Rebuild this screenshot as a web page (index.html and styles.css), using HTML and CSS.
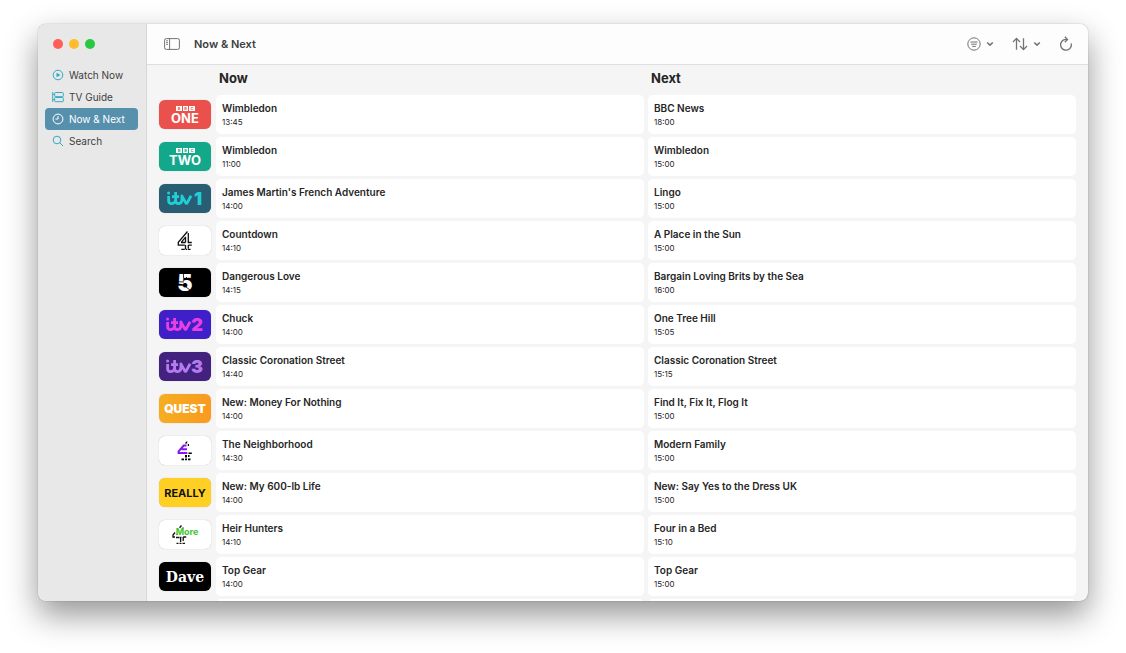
FILE: index.html
```html
<!DOCTYPE html>
<html lang="en">
<head>
<meta charset="utf-8">
<title>Now &amp; Next</title>
<link rel="stylesheet" href="styles.css">
</head>
<body>
<svg class="defs" aria-hidden="true">
  <symbol id="bbc" viewBox="0 0 52 29">
    <rect x="17" y="6" width="6" height="5" fill="#fff"/><rect x="24" y="6" width="5" height="5" fill="#fff"/><rect x="30" y="6" width="6" height="5" fill="#fff"/>
  </symbol>
  <symbol id="itv" viewBox="0 0 52 29">
    <circle cx="8.6" cy="9" r="1.5" fill="currentColor"/>
    <path d="M8.6 12v4.600q0 3 2.800 3q3.400 0 4.200-3.400M15.600 8v8.400q0 3.200 3 3.200q3.300 0 3.300-4v-3.600l4.200 7.400h.8l4.200-7.600M12 12.600h7" fill="none" stroke="currentColor" stroke-width="2.800" stroke-linejoin="round"/>
  </symbol>
</svg>

<div class="window">
  <aside class="sidebar">
    <div class="lights">
      <button class="light red" aria-label="Close"></button>
      <button class="light yellow" aria-label="Minimise"></button>
      <button class="light green" aria-label="Zoom"></button>
    </div>
    <nav class="nav">
      <a class="nav-item" href="#watch"><svg class="icon" viewBox="0 0 12 12"><circle cx="6" cy="6" r="4.8"/><path class="solid" d="M4.500 3.700v4.600L8.500 6z"/></svg>Watch Now</a>
      <a class="nav-item" href="#guide"><svg class="icon" viewBox="0 0 12 12"><path d="M.7 1v10M.7 3.300h2M.7 8.700h2"/><rect x="2.700" y="1.500" width="8.600" height="4.200" rx=".8"/><rect x="2.700" y="6.500" width="8.600" height="4.200" rx=".8"/></svg>TV Guide</a>
      <a class="nav-item selected" href="#now" aria-current="page"><svg class="icon" viewBox="0 0 12 12"><circle cx="6" cy="6" r="4.900"/><path d="M6 3v3H3.400"/></svg>Now &amp; Next</a>
      <a class="nav-item" href="#search"><svg class="icon" viewBox="0 0 12 12"><circle cx="5" cy="5" r="3.800"/><path d="M7.800 7.800l3.200 3.200"/></svg>Search</a>
    </nav>
  </aside>

  <main class="main">
    <header class="toolbar">
      <button class="tool" aria-label="Toggle sidebar"><svg width="16" height="12" viewBox="0 0 16 12"><rect x=".6" y=".6" width="14.800" height="10.800" rx="1.600"/><path d="M5.600.6v10.800M2.200 2.800h1.700M2.200 4.600h1.700M2.200 6.400h1.700"/></svg></button>
      <h1 class="title">Now &amp; Next</h1>
      <div class="tools">
        <button class="tool" aria-label="Filter"><svg width="14" height="14" viewBox="0 0 14 14"><circle cx="7" cy="7" r="6.200"/><path d="M3.400 5h7.200M4.200 7.200h5.600M5.200 9.400h3.600"/></svg><svg width="8" height="6" viewBox="0 0 8 6"><path class="bold" d="M1.200 1.500L4 4.200l2.800-2.700"/></svg></button>
        <button class="tool" aria-label="Sort"><svg width="16" height="14" viewBox="0 0 16 14"><path class="mid" d="M4.500 12.800V1.600M1 5l3.500-3.600L8 5M11.500 1.200v11.200M8 9l3.500 3.600L15 9"/></svg><svg width="8" height="6" viewBox="0 0 8 6"><path class="bold" d="M1.200 1.500L4 4.200l2.800-2.700"/></svg></button>
        <button class="tool" aria-label="Reload"><svg width="14" height="16" viewBox="0 0 14 16"><path class="mid" d="M12.200 7.400A5.400 5.400 0 1 1 6.800 3.400h1.400M5.800.8l2.700 2.600L5.800 6.200"/></svg></button>
      </div>
    </header>

    <div class="scroll">
      <table class="guide">
        <thead><tr><td></td><th scope="col">Now</th><th scope="col">Next</th></tr></thead>
        <tbody>
          <tr>
            <th scope="row"><svg class="logo one" viewBox="0 0 52 29" role="img" aria-label="BBC One"><use href="#bbc"/><text class="bbc" x="20" y="10">B</text><text class="bbc" x="26.500" y="10">B</text><text class="bbc" x="33" y="10">C</text><text class="sans" x="26" y="23">ONE</text></svg></th>
            <td><b>Wimbledon</b><time>13:45</time></td><td><b>BBC News</b><time>18:00</time></td>
          </tr>
          <tr>
            <th scope="row"><svg class="logo two" viewBox="0 0 52 29" role="img" aria-label="BBC Two"><use href="#bbc"/><text class="bbc" x="20" y="10">B</text><text class="bbc" x="26.500" y="10">B</text><text class="bbc" x="33" y="10">C</text><text class="sans" x="26" y="23">TWO</text></svg></th>
            <td><b>Wimbledon</b><time>11:00</time></td><td><b>Wimbledon</b><time>15:00</time></td>
          </tr>
          <tr>
            <th scope="row"><svg class="logo itv1" viewBox="0 0 52 29" role="img" aria-label="ITV1"><use href="#itv" x="1"/><text class="digit" x="39" y="21">1</text></svg></th>
            <td><b>James Martin's French Adventure</b><time>14:00</time></td><td><b>Lingo</b><time>15:00</time></td>
          </tr>
          <tr>
            <th scope="row"><svg class="logo white" viewBox="0 0 52 29" role="img" aria-label="Channel 4"><path class="mark" d="M28.500 5.500L19.300 16.300v2.800h6.500M22 16.500h4.500M26.500 11v5.500M26.500 19v4M29.300 7v9.500h3.500M29.300 19.200h3.500M29.300 19v3.500M22.300 23.400h3.500M26.600 23.400h1.500M28.800 23.400h2.800M22.200 16.300l4.600-5.400"/></svg></th>
            <td><b>Countdown</b><time>14:10</time></td><td><b>A Place in the Sun</b><time>15:00</time></td>
          </tr>
          <tr>
            <th scope="row"><svg class="logo black" viewBox="0 0 52 29" role="img" aria-label="Channel 5"><text class="five" x="26" y="23">5</text><path d="M24.500 5v5M18 13.600l7 .4M27.500 12v-3M27 19l4 3" stroke="#000" stroke-width=".8"/></svg></th>
            <td><b>Dangerous Love</b><time>14:15</time></td><td><b>Bargain Loving Brits by the Sea</b><time>16:00</time></td>
          </tr>
          <tr>
            <th scope="row"><svg class="logo itv2" viewBox="0 0 52 29" role="img" aria-label="ITV2"><use href="#itv"/><text class="digit" x="38" y="21">2</text></svg></th>
            <td><b>Chuck</b><time>14:00</time></td><td><b>One Tree Hill</b><time>15:05</time></td>
          </tr>
          <tr>
            <th scope="row"><svg class="logo itv3" viewBox="0 0 52 29" role="img" aria-label="ITV3"><use href="#itv"/><text class="digit" x="38" y="21">3</text></svg></th>
            <td><b>Classic Coronation Street</b><time>14:40</time></td><td><b>Classic Coronation Street</b><time>15:15</time></td>
          </tr>
          <tr>
            <th scope="row"><svg class="logo quest" viewBox="0 0 52 29" role="img" aria-label="Quest"><text class="wide" x="26" y="19">QUEST</text></svg></th>
            <td><b>New: Money For Nothing</b><time>14:00</time></td><td><b>Find It, Fix It, Flog It</b><time>15:00</time></td>
          </tr>
          <tr>
            <th scope="row"><svg class="logo white" viewBox="0 0 52 29" role="img" aria-label="E4"><path d="M26 7l2.200-2v2.500H26zM28.800 8h1.200v2h-1.200zM29.500 16.500h3.300v1.500h-3.300zM29 19h1.500v2H29zM26 19h2v2.500h-2zM22.500 22.400h2.500v1.800h-2.500zM26 22.400h2v1.800h-2zM29 22.400h2.500v1.800H29z"/><path d="M27.500 9.500h-2.800L19.600 15.400v1.700h8.800M22.500 13.300h5.500" fill="none" stroke="#8418ef" stroke-width="2"/></svg></th>
            <td><b>The Neighborhood</b><time>14:30</time></td><td><b>Modern Family</b><time>15:00</time></td>
          </tr>
          <tr>
            <th scope="row"><svg class="logo really" viewBox="0 0 52 29" role="img" aria-label="Really"><text class="tight" x="26" y="19">REALLY</text></svg></th>
            <td><b>New: My 600-lb Life</b><time>14:00</time></td><td><b>New: Say Yes to the Dress UK</b><time>15:00</time></td>
          </tr>
          <tr>
            <th scope="row"><svg class="logo white" viewBox="0 0 52 29" role="img" aria-label="More4"><path class="mark" d="M22.500 5.500l-2 2.300M16 12.500l-2 2.500v2h2M17 17.500h3.500M21 17.300h1.500M17.500 14.800l1-.8M21.600 17v5M24.200 17h3M24.200 17v4M17.500 23.400h2M20.500 23.400h2M23.500 23.400h2.500M24 7.500v1"/><text class="more" x="28" y="15">More</text></svg></th>
            <td><b>Heir Hunters</b><time>14:10</time></td><td><b>Four in a Bed</b><time>15:10</time></td>
          </tr>
          <tr>
            <th scope="row"><svg class="logo black" viewBox="0 0 52 29" role="img" aria-label="Dave"><text class="slab" x="26" y="20">Dave</text></svg></th>
            <td><b>Top Gear</b><time>14:00</time></td><td><b>Top Gear</b><time>15:00</time></td>
          </tr>
          <tr><th></th><td></td><td></td></tr>
        </tbody>
      </table>
    </div>
  </main>
</div>
</body>
</html>
```
FILE: styles.css
```css
* { box-sizing: border-box; }

body {
  margin: 0;
  height: 100vh;
  padding: 24px 38px 52px;
  background: #fff;
  color: #262626;
  font: 10px/14px Inter, "Liberation Sans", sans-serif;
  overflow: hidden;
}

.defs { display: none; }

button {
  border: 0;
  padding: 0;
  background: none;
}

.window {
  display: flex;
  height: 100%;
  border-radius: 8px;
  overflow: hidden;
  background: #f5f5f5;
  box-shadow: 0 0 1px rgba(0, 0, 0, .5), 0 14px 32px rgba(0, 0, 0, .42);
}

.sidebar {
  flex: 0 0 109px;
  padding: 0 8px 0 7px;
  background: #e8e8e8;
  border-right: 1px solid #d6d6d6;
}

.lights {
  display: flex;
  align-items: center;
  gap: 6px;
  height: 40px;
  padding-left: 8px;
}

.light {
  width: 10px;
  height: 10px;
  border-radius: 50%;
}

.red { background: #ff5f57; }
.yellow { background: #febc2e; }
.green { background: #28c840; }

.nav-item {
  display: flex;
  align-items: center;
  gap: 5px;
  height: 22px;
  padding-left: 7px;
  border-radius: 4px;
  color: #404040;
  text-decoration: none;
  white-space: nowrap;
}

.selected {
  background: #5690ad;
  color: #fff;
}

.icon {
  width: 12px;
  height: 12px;
  fill: none;
  stroke: #35a9c0;
  stroke-width: 1;
}

.icon .solid { fill: #35a9c0; stroke: none; }
.selected .icon { stroke: #fff; }

.main {
  flex: 1;
  min-width: 0;
  display: flex;
  flex-direction: column;
}

.toolbar {
  flex: none;
  display: flex;
  align-items: center;
  height: 41px;
  padding: 0 15px 0 17px;
  background: #fdfdfd;
  border-bottom: 1px solid #dedede;
}

.title {
  margin: 0 0 0 14px;
  color: #404040;
  font-size: 11px;
  font-weight: 600;
}

.tools {
  display: flex;
  gap: 18px;
  margin-left: auto;
}

.tool {
  display: flex;
  align-items: center;
  gap: 5px;
}

.tool svg {
  fill: none;
  stroke: #737373;
  stroke-width: 1;
}

.tool .mid { stroke-width: 1.3; }
.tool .bold { stroke-width: 1.6; }

.scroll {
  flex: 1;
  min-height: 0;
  overflow-y: auto;
  scrollbar-width: none;
}

.guide,
.guide thead,
.guide tbody { display: block; }

.guide { padding: 0 12px; }

.guide tr {
  display: grid;
  grid-template-columns: 53px 1fr 1fr;
  column-gap: 4px;
  align-items: center;
}

.guide th,
.guide td { padding: 0; text-align: left; }

.guide thead tr { height: 30px; }

.guide thead th {
  padding: 0 0 4px 3px;
  font-size: 13px;
  line-height: 18px;
  font-weight: 700;
}

.guide tbody tr {
  height: 39px;
  margin-bottom: 3px;
}

.guide tbody td {
  height: 39px;
  padding: 6px;
  border-radius: 5px;
  background: #fff;
}

.guide b,
.guide time { display: block; }

.guide b { font-weight: 600; }
.guide time { font-size: 8px; }

.logo {
  display: block;
  width: 52px;
  height: 29px;
  border-radius: 6px;
  box-shadow: 0 0 1px rgba(0, 0, 0, .3);
  text-anchor: middle;
}

.one { background: #ea514c; color: #ea514c; }
.two { background: #14a88b; color: #14a88b; }
.itv1 { background: #285d73; color: #1fcfd5; }
.itv2 { background: #3f1fc8; color: #e840e0; }
.itv3 { background: #42217f; color: #b57bee; }
.quest { background: linear-gradient(90deg, #f5ae20, #fa9a20); }
.really { background: #ffcf24; }
.white { background: #fff; }
.black { background: #000; }

.mark { fill: none; stroke: #111; stroke-width: 1.3; }
.bbc { fill: currentColor; font: 700 4px Inter, sans-serif; }
.sans { fill: #fff; font: 700 13px Inter, sans-serif; }
.digit { fill: currentColor; font: 900 18px Inter, sans-serif; }
.five { fill: #fff; font: 900 23px Inter, sans-serif; }
.wide { fill: #fff; font: 900 12px Inter, sans-serif; }
.tight { fill: #111; font: 700 11px Inter, sans-serif; }
.more { fill: #43c52b; font: 700 9px Inter, sans-serif; }
.slab { fill: #fff; font: 700 14px "DejaVu Serif", serif; }
```
